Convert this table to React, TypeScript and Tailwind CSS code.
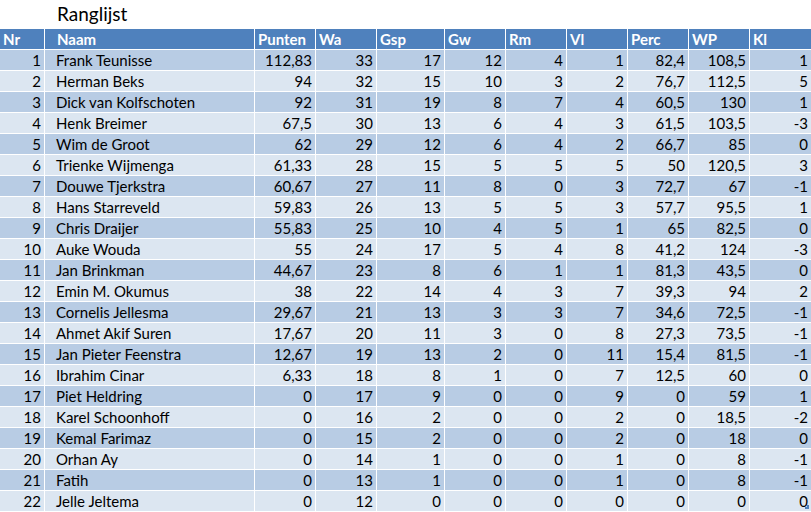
import React from "react";

const columns = ["Nr", "Naam", "Punten", "Wa", "Gsp", "Gw", "Rm", "Vl", "Perc", "WP", "Kl"];

const rows: (string | number)[][] = [
  [1, "Frank Teunisse", "112,83", 33, 17, 12, 4, 1, "82,4", "108,5", 1],
  [2, "Herman Beks", "94", 32, 15, 10, 3, 2, "76,7", "112,5", 5],
  [3, "Dick van Kolfschoten", "92", 31, 19, 8, 7, 4, "60,5", "130", 1],
  [4, "Henk Breimer", "67,5", 30, 13, 6, 4, 3, "61,5", "103,5", -3],
  [5, "Wim de Groot", "62", 29, 12, 6, 4, 2, "66,7", "85", 0],
  [6, "Trienke Wijmenga", "61,33", 28, 15, 5, 5, 5, "50", "120,5", 3],
  [7, "Douwe Tjerkstra", "60,67", 27, 11, 8, 0, 3, "72,7", "67", -1],
  [8, "Hans Starreveld", "59,83", 26, 13, 5, 5, 3, "57,7", "95,5", 1],
  [9, "Chris Draijer", "55,83", 25, 10, 4, 5, 1, "65", "82,5", 0],
  [10, "Auke Wouda", "55", 24, 17, 5, 4, 8, "41,2", "124", -3],
  [11, "Jan Brinkman", "44,67", 23, 8, 6, 1, 1, "81,3", "43,5", 0],
  [12, "Emin M. Okumus", "38", 22, 14, 4, 3, 7, "39,3", "94", 2],
  [13, "Cornelis Jellesma", "29,67", 21, 13, 3, 3, 7, "34,6", "72,5", -1],
  [14, "Ahmet Akif Suren", "17,67", 20, 11, 3, 0, 8, "27,3", "73,5", -1],
  [15, "Jan Pieter Feenstra", "12,67", 19, 13, 2, 0, 11, "15,4", "81,5", -1],
  [16, "Ibrahim Cinar", "6,33", 18, 8, 1, 0, 7, "12,5", "60", 0],
  [17, "Piet Heldring", "0", 17, 9, 0, 0, 9, "0", "59", 1],
  [18, "Karel Schoonhoff", "0", 16, 2, 0, 0, 2, "0", "18,5", -2],
  [19, "Kemal Farimaz", "0", 15, 2, 0, 0, 2, "0", "18", 0],
  [20, "Orhan Ay", "0", 14, 1, 0, 0, 1, "0", "8", -1],
  [21, "Fatih", "0", 13, 1, 0, 0, 1, "0", "8", -1],
  [22, "Jelle Jeltema", "0", 12, 0, 0, 0, 0, "0", "0", 0],
];

const App = () => {
  return (
    <div className="w-[811px] h-[512px] overflow-hidden bg-white font-['Lato',sans-serif] text-[15px] text-black">
      <div className="h-[29px] pl-[57px] pt-[3px] text-[19px] leading-[22px]">Ranglijst</div>
      <div className="relative grid grid-cols-[44px_209px_60px_60px_67px_60px_60px_60px_60px_60px_61px] gap-px bg-white">
        {/* header */}
        {columns.map((c, i) => (
          <div
            key={c}
            className={`h-[20px] bg-[#4f81bd] font-bold text-white leading-[21px] ${
              i === 1 ? "pl-[12px]" : "pl-[3px]"
            }`}
          >
            {c}
          </div>
        ))}
        {rows.map((r, ri) =>
          r.map((v, ci) => (
            <div
              key={`${ri}-${ci}`}
              className={`h-[20px] leading-[21px] whitespace-nowrap ${
                ri % 2 === 0 ? "bg-[#b8cce4]" : "bg-[#dce6f1]"
              } ${ci === 1 ? "pl-[11px] text-left" : "pr-[3px] text-right"}`}
            >
              {v}
            </div>
          ))
        )}
        {/* table resize handle */}
        <div className="absolute right-[2px] bottom-[2px] w-[4px] h-[4px] border-r-2 border-b-2 border-[#4f81bd]"></div>
      </div>
    </div>
  );
};

export default App;
